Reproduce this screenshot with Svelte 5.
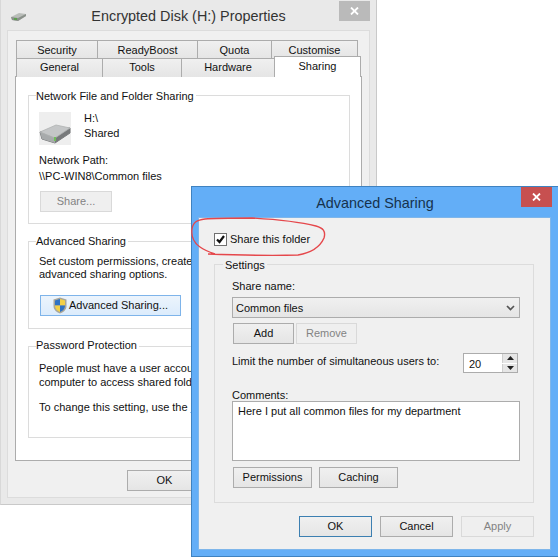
<script>
  const topTabs = ["Security", "ReadyBoost", "Quota", "Customise"];
  const lowTabs = ["General", "Tools", "Hardware"];
</script>

<style>
  :global(body) {
    margin: 0;
    background: #fff;
  }
  .stage {
    position: relative;
    width: 558px;
    height: 557px;
    overflow: hidden;
    font-family: "Liberation Sans", Arial, sans-serif;
    font-size: 11px;
    line-height: 15px;
    color: #111;
  }
  .window {
    position: absolute;
    box-sizing: border-box;
  }
  .back {
    left: 0;
    top: 0;
    width: 377px;
    height: 505px;
    background: #e9e9e9;
    border: 1px solid #c9c9c9;
    border-top: 0;
    border-left-color: #d8d8d8;
  }
  .front {
    left: 191px;
    top: 186px;
    width: 367px;
    height: 371px;
    background: #63aef7;
    border: 1px solid #3f82c0;
    border-right: 0;
  }
  .titlebar {
    display: grid;
    grid-template-columns: 1fr auto 1fr;
    align-items: start;
    height: 30px;
    padding: 0 6px;
  }
  .title {
    font-size: 14.4px;
    line-height: 20px;
    margin-top: 6px;
    color: #333;
    white-space: nowrap;
  }
  .front .title {
    color: #16324d;
  }
  .titleicon {
    margin: 12px 0 0 4px;
    display: block;
  }
  .close {
    justify-self: end;
    width: 31px;
    height: 20px;
    margin-top: 1px;
    background: #bababa;
    color: #fff;
    display: flex;
    align-items: center;
    justify-content: center;
  }
  .front .close {
    margin-top: 0;
    background: #c75050;
  }
  .client {
    background: #f0f0f0;
    border: 1px solid #dcdcdc;
    margin: 0 6px 0 6px;
    height: 468px;
    box-sizing: border-box;
    padding: 9px 7px 0 7px;
  }
  .tabrow {
    display: grid;
    margin-left: 1px;
    height: 18px;
  }
  .tabrow.top {
    grid-template-columns: 81px 100px 74px 87px;
  }
  .tabrow.low {
    grid-template-columns: 86px 79px 93px 87px;
  }
  .tab {
    box-sizing: border-box;
    border: 1px solid #acacac;
    border-right-width: 0;
    border-bottom-width: 0;
    background: linear-gradient(#f0f0f0, #e5e5e5);
    text-align: center;
    line-height: 17px;
  }
  .tabrow.top .tab {
    padding-top: 1px;
    line-height: 16px;
  }
  .tab.last {
    border-right-width: 1px;
  }
  .tab.active {
    background: #fff;
    margin-top: -2px;
    height: 21px;
    border-right-width: 1px;
    position: relative;
    z-index: 2;
    line-height: 18px;
  }
  .panel {
    box-sizing: border-box;
    height: 385px;
    background: #fff;
    border: 1px solid #acacac;
    padding: 18px 11px 0 12px;
  }
  .group {
    box-sizing: border-box;
    border: 1px solid #dcdcdc;
    padding: 0 0 0 8px;
    margin-bottom: 17px;
  }
  .group.one { height: 129px; }
  .group.two { height: 88px; }
  .group.three { height: 92px; }
  .legend {
    width: fit-content;
    margin: -7px 0 0 -1px;
    padding: 0 2px 0 0;
    background: #fff;
    white-space: nowrap;
  }
  .line {
    white-space: nowrap;
  }
  .drive {
    display: flex;
    gap: 13px;
    margin: 8px 0 0 2px;
  }
  .drivetext {
    margin-top: -1px;
  }
  .driveicon {
    width: 32px;
    height: 33px;
    background: #eeeeee;
    display: block;
  }
  .pathlabel {
    margin-top: 8px;
    margin-left: 2px;
  }
  .pathlabel .line + .line {
    margin-top: 1px;
  }
  .btn {
    box-sizing: border-box;
    display: flex;
    align-items: center;
    justify-content: center;
    height: 21px;
    border: 1px solid #acacac;
    background: linear-gradient(#f0f0f0, #e5e5e5);
    white-space: nowrap;
  }
  .btn.off {
    background: #efefef;
    border-color: #d9d9d9;
    color: #838383;
  }
  .btn.primary {
    border-color: #3c7fb1;
  }
  .btn.focus {
    border-color: #7eb4ea;
    background: linear-gradient(#ecf4fc, #dcecfc);
    gap: 2px;
  }
  .sharebtn {
    width: 72px;
    margin: 7px 0 0 3px;
  }
  .advbtn {
    width: 141px;
    margin: 14px 0 0 3px;
  }
  .two .para {
    margin: 6px 0 0 2px;
    line-height: 13px;
  }
  .three .para {
    margin: 8px 0 0 2px;
    line-height: 14px;
  }
  .three .para + .para {
    margin-top: 11px;
  }
  .group.two .legend {
    margin-top: -8px;
  }
  .group.three .legend {
    margin-top: -9px;
  }
  .link {
    color: #0066cc;
    text-decoration: underline;
  }
  .backok {
    width: 75px;
    margin: 9px 0 0 112px;
  }
  .fclient {
    box-sizing: border-box;
    background: #f0f0f0;
    border: 1px solid #7fb6ea;
    margin: 0 7px 0 6px;
    height: 333px;
    padding: 15px 16px 0 15px;
  }
  .check {
    display: flex;
    align-items: center;
    gap: 3px;
    height: 13px;
  }
  .box {
    box-sizing: border-box;
    width: 13px;
    height: 13px;
    background: #fff;
    border: 1px solid #707070;
    display: block;
  }
  .settings {
    box-sizing: border-box;
    height: 239px;
    margin-top: 18px;
    border: 1px solid #dcdcdc;
    padding: 0 13px 0 17px;
  }
  .settings .legend {
    background: #f0f0f0;
    margin: -7px 0 6px -9px;
    padding: 0 2px;
  }
  .select {
    box-sizing: border-box;
    height: 21px;
    margin-top: 3px;
    border: 1px solid #acacac;
    background: linear-gradient(#f0f0f0, #e5e5e5);
    display: flex;
    align-items: center;
    justify-content: space-between;
    padding: 0 4px 0 3px;
  }
  .seltext {
    padding-top: 2px;
  }
  .row {
    display: flex;
    gap: 2px;
    margin: 5px 0 0 1px;
  }
  .addbtn { width: 61px; }
  .removebtn { width: 61px; }
  .limit {
    display: flex;
    justify-content: space-between;
    align-items: flex-start;
    margin: 9px 2px 0 0;
    height: 20px;
    white-space: nowrap;
  }
  .limittext {
    padding-top: 1px;
  }
  .spin {
    box-sizing: border-box;
    width: 55px;
    height: 20px;
    background: #fff;
    border: 1px solid #acacac;
    display: flex;
    justify-content: space-between;
    padding-left: 5px;
    line-height: 20px;
  }
  .spinbtns {
    width: 15px;
    display: flex;
    flex-direction: column;
    gap: 1px;
  }
  .spinbtns span {
    flex: 1;
    background: #e6e6e6;
    display: flex;
    align-items: center;
    justify-content: center;
    border-left: 1px solid #cfcfcf;
  }
  .label-c {
    margin-top: 15px;
  }
  .textarea {
    box-sizing: border-box;
    height: 60px;
    margin-top: -2px;
    background: #fff;
    border: 1px solid #acacac;
    padding: 2px 5px;
    white-space: nowrap;
  }
  .row.perm {
    gap: 7px;
    margin-top: 6px;
  }
  .permbtn { width: 79px; }
  .footer {
    display: flex;
    justify-content: flex-end;
    gap: 8px;
    margin-top: 13px;
  }
  .footer .btn { width: 73px; }
  .scribble {
    position: absolute;
    left: 0;
    top: 0;
    pointer-events: none;
  }
</style>

<div class="stage">
  <div class="window back">
    <div class="titlebar">
      <svg class="titleicon" width="16" height="10" viewBox="0 0 16 10">
        <path d="M0 5 L8 1 L15 2 L15 4 L7 9 L1 8 Z" fill="#b9bdb9" />
        <path d="M0 5 L7 6 L15 2 L15 4 L7 9 L1 8 Z" fill="#8a908a" />
        <rect x="3" y="6" width="3" height="2" fill="#5da04f" />
      </svg>
      <div class="title">Encrypted Disk (H:) Properties</div>
      <div class="close">
        <svg width="9" height="8" viewBox="0 0 9 8"><path d="M1 0.5 L8 7.5 M8 0.5 L1 7.5" stroke="#fff" stroke-width="1.8" /></svg>
      </div>
    </div>
    <div class="client">
      <div class="tabrow top">
        {#each topTabs as tab, i}
          <div class="tab" class:last={i === topTabs.length - 1}>{tab}</div>
        {/each}
      </div>
      <div class="tabrow low">
        {#each lowTabs as tab}
          <div class="tab">{tab}</div>
        {/each}
        <div class="tab active">Sharing</div>
      </div>
      <div class="panel">
        <div class="group one">
          <div class="legend">Network File and Folder Sharing</div>
          <div class="drive">
            <svg class="driveicon" viewBox="0 0 32 33">
              <path d="M1 20 L3 27 L16 31 L31 21 L31 16 Z" fill="#77797b" stroke="#77797b" stroke-linejoin="round" />
              <path d="M1 20 L3 27 L16 31 L16 26 Z" fill="#a7aaab" />
              <path d="M1 20 L17 13 L31 16 L16 26 Z" fill="#c4c6c7" stroke="#b0b2b3" stroke-linejoin="round" stroke-width="0.8" />
              <rect x="15" y="25" width="2" height="4" fill="#6fbf5a" />
            </svg>
            <div class="drivetext">
              <div class="line">H:\</div>
              <div class="line">Shared</div>
            </div>
          </div>
          <div class="pathlabel">
            <div class="line">Network Path:</div>
            <div class="line">\\PC-WIN8\Common files</div>
          </div>
          <div class="btn off sharebtn">Share...</div>
        </div>
        <div class="group two">
          <div class="legend">Advanced Sharing</div>
          <div class="para">
            <div class="line">Set custom permissions, create multiple shares, and set other</div>
            <div class="line">advanced sharing options.</div>
          </div>
          <div class="btn focus advbtn">
            <svg width="14" height="17" viewBox="0 0 14 17">
              <path d="M7 0.5 L13.5 2.5 L13.5 9 C13.5 13 10 15.5 7 16.5 C4 15.5 0.5 13 0.5 9 L0.5 2.5 Z" fill="#a9a69a" />
              <path d="M7 2 L7 8.5 L2 8.5 L2 3.5 Z" fill="#2f72c4" />
              <path d="M7 2 L12 3.5 L12 8.5 L7 8.5 Z" fill="#f3d046" />
              <path d="M2 8.5 L7 8.5 L7 15 C4.5 14 2 12 2 8.5 Z" fill="#f3d046" />
              <path d="M7 8.5 L12 8.5 C12 12 9.5 14 7 15 Z" fill="#2f72c4" />
            </svg>
            <span>Advanced Sharing...</span>
          </div>
        </div>
        <div class="group three">
          <div class="legend">Password Protection</div>
          <div class="para">
            <div class="line">People must have a user account and password for this</div>
            <div class="line">computer to access shared folders.</div>
          </div>
          <div class="para line">To change this setting, use the <span class="link">Network and Sharing Center</span>.</div>
        </div>
      </div>
      <div class="btn backok">OK</div>
    </div>
  </div>

  <div class="window front">
    <div class="titlebar">
      <span></span>
      <div class="title">Advanced Sharing</div>
      <div class="close">
        <svg width="9" height="8" viewBox="0 0 9 8"><path d="M1 0.5 L8 7.5 M8 0.5 L1 7.5" stroke="#fff" stroke-width="1.8" /></svg>
      </div>
    </div>
    <div class="fclient">
      <div class="check">
        <svg class="box" viewBox="0 0 11 11"><path d="M2 5.5 L4.5 8 L9 2" fill="none" stroke="#111" stroke-width="2.2" /></svg>
        <span>Share this folder</span>
      </div>
      <div class="settings">
        <div class="legend">Settings</div>
        <div>Share name:</div>
        <div class="select">
          <span class="seltext">Common files</span>
          <svg width="9" height="6" viewBox="0 0 9 6"><path d="M1 1 L4.5 4.5 L8 1" fill="none" stroke="#555" stroke-width="1.7" /></svg>
        </div>
        <div class="row">
          <div class="btn addbtn">Add</div>
          <div class="btn off removebtn">Remove</div>
        </div>
        <div class="limit">
          <span class="limittext">Limit the number of simultaneous users to:</span>
          <div class="spin">
            <span>20</span>
            <div class="spinbtns">
              <span><svg width="7" height="4" viewBox="0 0 7 4"><path d="M3.5 0 L7 4 L0 4 Z" fill="#222" /></svg></span>
              <span><svg width="7" height="4" viewBox="0 0 7 4"><path d="M0 0 L7 0 L3.5 4 Z" fill="#222" /></svg></span>
            </div>
          </div>
        </div>
        <div class="label-c">Comments:</div>
        <div class="textarea">Here I put all common files for my department</div>
        <div class="row perm">
          <div class="btn permbtn">Permissions</div>
          <div class="btn permbtn">Caching</div>
        </div>
      </div>
      <div class="footer">
        <div class="btn primary">OK</div>
        <div class="btn">Cancel</div>
        <div class="btn off">Apply</div>
      </div>
    </div>
  </div>

  <svg class="scribble" width="558" height="557" viewBox="0 0 558 557">
    <path d="M208 254 C235 255 270 256 298 255 C310 253 320 247 324 238 C326 231 323 228 316 226 C300 222 270 219 252 218 C235 218 215 218 205 219 C197 220 193 222 192 229 C191 236 194 243 200 247 C204 250 209 252 215 254" fill="none" stroke="#e5474b" stroke-width="1.4" />
  </svg>
</div>
